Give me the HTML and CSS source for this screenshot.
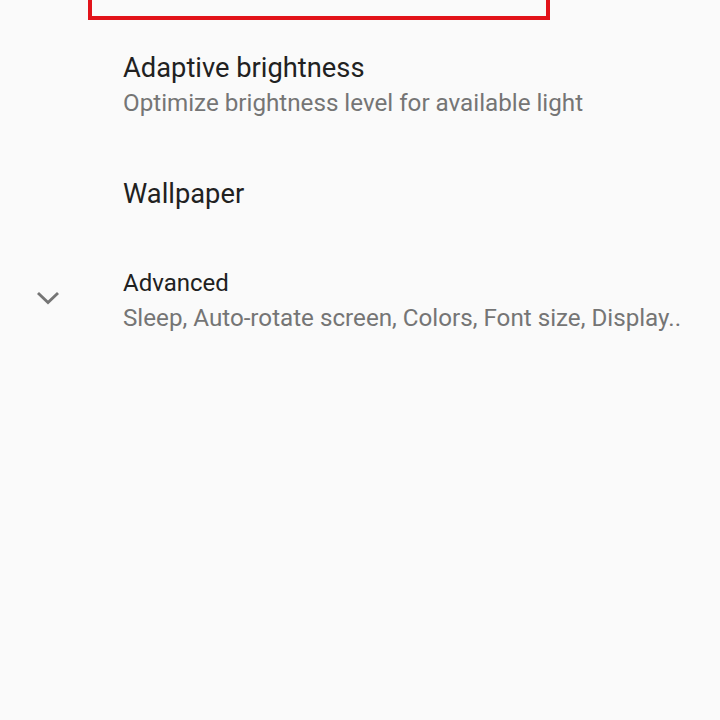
FILE: index.html
```html
<!DOCTYPE html>
<html>
<head>
<meta charset="utf-8">
<link rel="stylesheet" href="styles.css">
</head>
<body>
<div class="highlight"></div>
<div class="list">
  <div class="row row-first">
    <div class="icon"></div>
    <div class="text">
      <div class="title">Adaptive brightness</div>
      <div class="summary">Optimize brightness level for available light</div>
    </div>
  </div>
  <div class="row row-second">
    <div class="icon"></div>
    <div class="text">
      <div class="title">Wallpaper</div>
    </div>
  </div>
  <div class="row row-adv">
    <div class="icon">
      <svg width="24" height="24" viewBox="0 0 24 24"><path d="M2 7 L12 16.5 L22 7" fill="none" stroke="#757575" stroke-width="2.9"/></svg>
    </div>
    <div class="text">
      <div class="title small">Advanced</div>
      <div class="summary">Sleep, Auto-rotate screen, Colors, Font size, Display..</div>
    </div>
  </div>
</div>
</body>
</html>
```

FILE: styles.css
```css
html, body {
  margin: 0;
  padding: 0;
  background: #fafafa;
  font-family: Roboto, "Liberation Sans", sans-serif;
}
.highlight {
  box-sizing: border-box;
  margin-left: 88px;
  width: 462px;
  height: 60px;
  margin-top: -40px;
  border: 4px solid #e2131a;
}
.list {
  display: flex;
  flex-direction: column;
}
.row {
  display: flex;
  align-items: center;
}
.icon {
  width: 123px;
  flex: none;
  display: flex;
  align-items: center;
  justify-content: center;
  padding-right: 27px;
  box-sizing: border-box;
}
.icon svg { display: block; margin-bottom: 6px; }
.text { display: flex; flex-direction: column; }
.title {
  font-size: 27.3px;
  line-height: 36px;
  color: #212121;
}
.title.small { font-size: 24px; line-height: 35px; }
.summary {
  font-size: 24.2px;
  line-height: 34px;
  color: #757575;
}
.row-first { padding-top: 30px; padding-bottom: 28px; }
.row-second { padding-top: 28px; padding-bottom: 27px; }
.row-adv { padding-top: 27px; }
```
